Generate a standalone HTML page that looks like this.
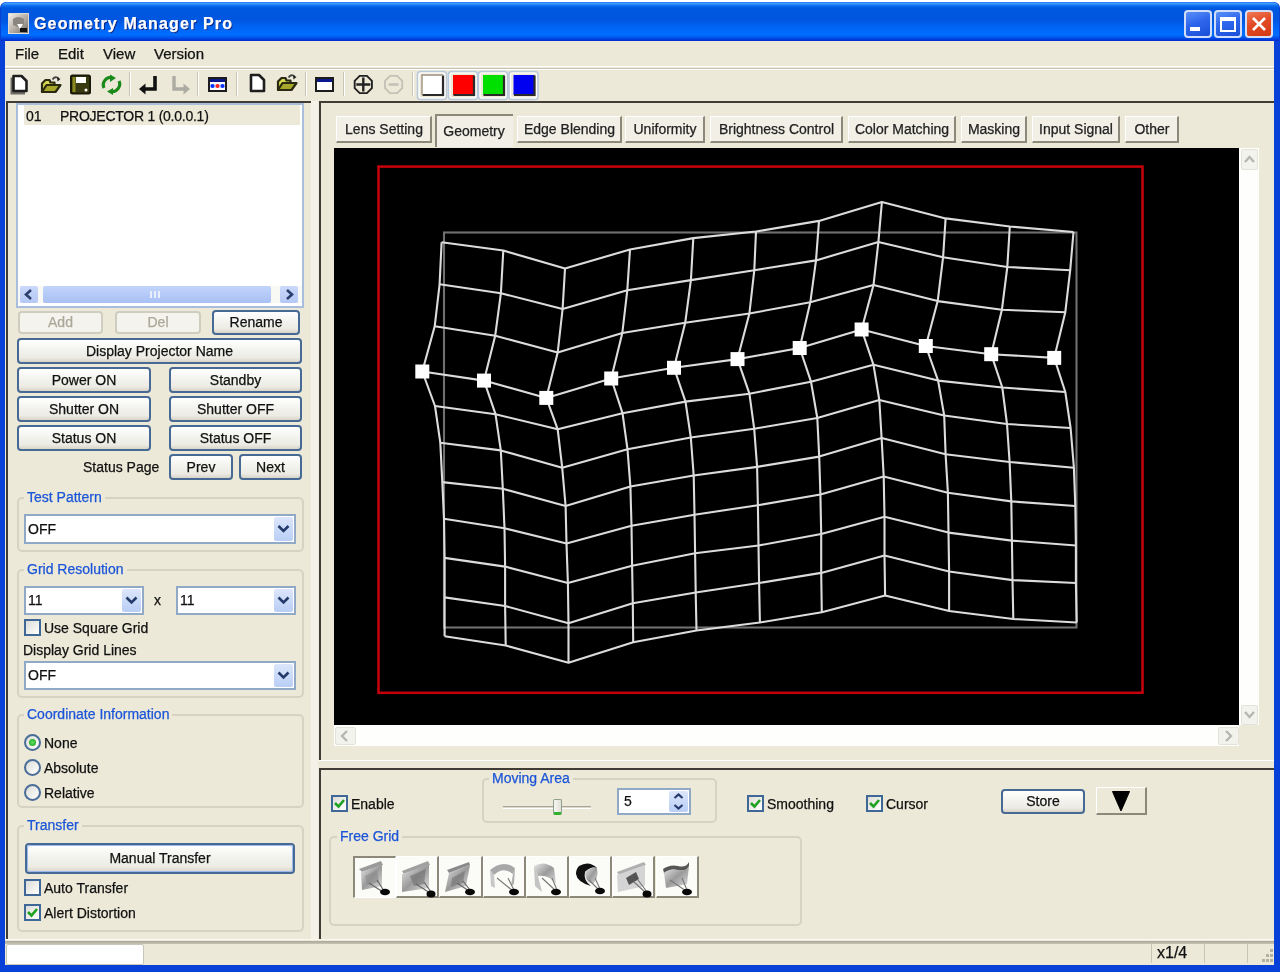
<!DOCTYPE html><html><head><meta charset="utf-8"><style>html,body{margin:0;padding:0;width:1280px;height:972px;overflow:hidden;background:#fff;}body{position:relative;font-family:"Liberation Sans", sans-serif;}div{box-sizing:border-box;-webkit-text-stroke:0.25px currentColor;}</style></head><body><div id="wrap" style="position:absolute;left:0;top:0;width:1280px;height:972px;filter:blur(0.35px);">
<div style="position:absolute;left:0px;top:2px;width:1280px;height:970px;background:#0841D8;border-radius:6px 6px 0 0;"></div>
<div style="position:absolute;left:1px;top:2px;width:1278px;height:39px;background:linear-gradient(#3070FF 0px,#3A9AF8 1.5px,#0A6AF0 4px,#0058E0 6px,#0056DE 18px,#0062F2 24px,#006EFF 33px,#0050E8 36px,#0030D0 38.5px);border-radius:6px 6px 0 0;"></div>
<div style="position:absolute;left:5px;top:41px;width:1269px;height:924px;background:#ECE9D8;"></div>
<div style="position:absolute;left:8px;top:13px;width:21px;height:21px;background:linear-gradient(135deg,#F2F0EA 0%,#B8B2A8 50%,#6E6A64 100%);border:1px solid #E0DCD4;"></div>
<svg style="position:absolute;left:8px;top:13px" width="21" height="21"><path d="M5 6 Q10 2 16 6 L16 12 L10 14 L5 12 Z" fill="#8A8680"/><path d="M9 11 L15 11 L12 16 Z" fill="#FFFFFF"/><rect x="12" y="15" width="7" height="4" fill="#111"/></svg>
<div style="position:absolute;left:34px;top:16px;font-size:16px;line-height:16px;color:#fff;white-space:nowrap;font-weight:bold;letter-spacing:1.15px;text-shadow:1px 1px 0 #0A1E78;">Geometry Manager Pro</div>
<div style="position:absolute;left:1183.5px;top:9.5px;width:28px;height:28.5px;background:linear-gradient(160deg,#5A90F8 0%,#2D66EC 45%,#1A4FD8 100%);border:2px solid #D2DEF8;border-radius:4px;"></div>
<div style="position:absolute;left:1214px;top:9.5px;width:28px;height:28.5px;background:linear-gradient(160deg,#5A90F8 0%,#2D66EC 45%,#1A4FD8 100%);border:2px solid #D2DEF8;border-radius:4px;"></div>
<div style="position:absolute;left:1244.5px;top:9.5px;width:28px;height:28.5px;background:linear-gradient(160deg,#F07A58 0%,#E24B25 45%,#D33A12 100%);border:2px solid #D2DEF8;border-radius:4px;"></div>
<div style="position:absolute;left:1190px;top:27px;width:10px;height:4px;background:#fff;"></div>
<div style="position:absolute;left:1220px;top:16.5px;width:16px;height:15.5px;border:2px solid #fff;border-top-width:4px;"></div>
<svg style="position:absolute;left:1244.5px;top:9.5px" width="28" height="28"><path d="M8 8 L20 20 M20 8 L8 20" stroke="#fff" stroke-width="2.6"/></svg>
<div style="position:absolute;left:15px;top:46px;font-size:15px;line-height:15px;color:#111;white-space:nowrap;">File</div>
<div style="position:absolute;left:58px;top:46px;font-size:15px;line-height:15px;color:#111;white-space:nowrap;">Edit</div>
<div style="position:absolute;left:103px;top:46px;font-size:15px;line-height:15px;color:#111;white-space:nowrap;">View</div>
<div style="position:absolute;left:154px;top:46px;font-size:15px;line-height:15px;color:#111;white-space:nowrap;">Version</div>
<div style="position:absolute;left:5px;top:66px;width:1269px;height:1px;background:#FFFFFF;"></div>
<div style="position:absolute;left:5px;top:68px;width:1269px;height:1px;background:#C9C5B6;"></div>
<div style="position:absolute;left:5px;top:69px;width:1269px;height:1px;background:#FFFFFF;"></div>
<div style="position:absolute;left:129px;top:72px;width:1px;height:24px;background:#CAC6B6;"></div>
<div style="position:absolute;left:130px;top:72px;width:1px;height:24px;background:#FFFFFF;"></div>
<div style="position:absolute;left:197px;top:72px;width:1px;height:24px;background:#CAC6B6;"></div>
<div style="position:absolute;left:198px;top:72px;width:1px;height:24px;background:#FFFFFF;"></div>
<div style="position:absolute;left:236px;top:72px;width:1px;height:24px;background:#CAC6B6;"></div>
<div style="position:absolute;left:237px;top:72px;width:1px;height:24px;background:#FFFFFF;"></div>
<div style="position:absolute;left:305px;top:72px;width:1px;height:24px;background:#CAC6B6;"></div>
<div style="position:absolute;left:306px;top:72px;width:1px;height:24px;background:#FFFFFF;"></div>
<div style="position:absolute;left:343px;top:72px;width:1px;height:24px;background:#CAC6B6;"></div>
<div style="position:absolute;left:344px;top:72px;width:1px;height:24px;background:#FFFFFF;"></div>
<div style="position:absolute;left:412px;top:72px;width:1px;height:24px;background:#CAC6B6;"></div>
<div style="position:absolute;left:413px;top:72px;width:1px;height:24px;background:#FFFFFF;"></div>
<svg style="position:absolute;left:0;top:0" width="1280" height="110"><path d="M12.0 77.5 L12.0 93.0 L25.0 93.0" fill="none" stroke="#6E6C66" stroke-width="3"/><path d="M13.5 76.0 L21.5 76.0 L26.5 81.0 L26.5 91.0 L13.5 91.0 Z" fill="#FFFFFF" stroke="#1E1E1E" stroke-width="2.6" stroke-linejoin="round"/><path d="M251 75.0 L259.0 75.0 L264.0 80.0 L264.0 91.0 L251 91.0 Z" fill="#FFFFFF" stroke="#1E1E1E" stroke-width="2.6" stroke-linejoin="round"/><path d="M42.0 83.5 L45.5 80.0 L49.5 80.0 L50.5 82.5 L54.5 82.5 L54.5 92.0 L42.0 92.0 Z" fill="#D8D850" stroke="#2A2A10" stroke-width="2.2" stroke-linejoin="round"/><path d="M42.0 92.0 L46.5 85.0 L60.5 85.0 L55.5 92.0 Z" fill="#A6A62A" stroke="#2A2A10" stroke-width="2.2" stroke-linejoin="round"/><path d="M52.5 79.5 Q55.5 75.5 58.5 78.5" fill="none" stroke="#444" stroke-width="1.8"/><path d="M57.0 77.0 L60.5 79.0 L57.5 81.5 Z" fill="#222"/><path d="M278.0 81.5 L281.5 78.0 L285.5 78.0 L286.5 80.5 L290.5 80.5 L290.5 90.0 L278.0 90.0 Z" fill="#D8D850" stroke="#2A2A10" stroke-width="2.2" stroke-linejoin="round"/><path d="M278.0 90.0 L282.5 83.0 L296.5 83.0 L291.5 90.0 Z" fill="#A6A62A" stroke="#2A2A10" stroke-width="2.2" stroke-linejoin="round"/><path d="M288.5 77.5 Q291.5 73.5 294.5 76.5" fill="none" stroke="#444" stroke-width="1.8"/><path d="M293.0 75.0 L296.5 77.0 L293.5 79.5 Z" fill="#222"/><rect x="71" y="75.5" width="19" height="18" rx="1.5" fill="#3A3A10" stroke="#1A1A08" stroke-width="2"/><rect x="72.5" y="77" width="3" height="15" fill="#8A8A20"/><rect x="76" y="77" width="10" height="6" fill="#FFFFFF"/><circle cx="86" cy="90" r="1.5" fill="#fff"/><path d="M104 88 A7.5 7.5 0 0 1 112 77.5" fill="none" stroke="#1A8A1A" stroke-width="3.2"/><path d="M110 74.5 L116 78 L110 82 Z" fill="#1A8A1A"/><path d="M119 81 A7.5 7.5 0 0 1 111 91.5" fill="none" stroke="#1A8A1A" stroke-width="3.2"/><path d="M113 88 L107 91.5 L113 95 Z" fill="#1A8A1A"/><path d="M155 76 L155 89 L144 89" fill="none" stroke="#111" stroke-width="3.6" stroke-linejoin="miter"/><path d="M145.5 83.5 L139 89 L145.5 94.5 Z" fill="#111"/><path d="M174 76 L174 89 L185 89" fill="none" stroke="#ADACA2" stroke-width="3.4"/><path d="M183.5 83.5 L190 89 L183.5 94.5 Z" fill="#ADACA2"/><rect x="209" y="78" width="17" height="13" fill="#FFFFFF" stroke="#1C1C1C" stroke-width="2"/><rect x="210" y="79" width="15" height="3" fill="#0A1890"/><rect x="210" y="84" width="15" height="4" fill="#D8E0FF"/><circle cx="212.5" cy="86" r="2" fill="#0030FF"/><circle cx="217.5" cy="86" r="2" fill="#FF2020"/><circle cx="222.5" cy="86" r="2" fill="#0030FF"/><rect x="316" y="78" width="17" height="13" fill="#FFFFFF" stroke="#1C1C1C" stroke-width="2"/><rect x="317" y="79" width="15" height="3" fill="#0A1890"/><polygon points="371.9,88.1 366.9,93.1 359.7,93.1 354.7,88.1 354.7,80.9 359.7,75.9 366.9,75.9 371.9,80.9" fill="none" stroke="#222" stroke-width="1.9"/><path d="M356.3 84.5 L370.3 84.5 M363.3 77.5 L363.3 91.5" stroke="#222" stroke-width="2.4"/><polygon points="402.2,88.1 397.2,93.1 390.0,93.1 385.0,88.1 385.0,80.9 390.0,75.9 397.2,75.9 402.2,80.9" fill="none" stroke="#C4C2B6" stroke-width="1.9"/><path d="M388.6 84.5 L398.6 84.5" stroke="#C4C2B6" stroke-width="2.6"/><rect x="417.5" y="71.5" width="29" height="28" rx="3" fill="none" stroke="#B9C9DD" stroke-width="1.6"/><rect x="419" y="73" width="26" height="25" rx="2" fill="none" stroke="#FFFFFF" stroke-width="1.2"/><rect x="422" y="75" width="21" height="20" fill="#FFFFFF"/><path d="M443 75.5 L443 95 L422.5 95" fill="none" stroke="#2A2A2A" stroke-width="2.2"/><path d="M422 95 L422 75 L443 75" fill="none" stroke="#9A9080" stroke-width="1.4"/><rect x="448.5" y="71.5" width="29" height="28" rx="3" fill="none" stroke="#B9C9DD" stroke-width="1.6"/><rect x="450" y="73" width="26" height="25" rx="2" fill="none" stroke="#FFFFFF" stroke-width="1.2"/><rect x="453" y="75" width="21" height="20" fill="#FF0000"/><path d="M474 75.5 L474 95 L453.5 95" fill="none" stroke="#2A2A2A" stroke-width="2.2"/><rect x="478.5" y="71.5" width="29" height="28" rx="3" fill="none" stroke="#B9C9DD" stroke-width="1.6"/><rect x="480" y="73" width="26" height="25" rx="2" fill="none" stroke="#FFFFFF" stroke-width="1.2"/><rect x="483" y="75" width="21" height="20" fill="#00E000"/><path d="M504 75.5 L504 95 L483.5 95" fill="none" stroke="#2A2A2A" stroke-width="2.2"/><rect x="509.0" y="71.5" width="29" height="28" rx="3" fill="none" stroke="#B9C9DD" stroke-width="1.6"/><rect x="510.5" y="73" width="26" height="25" rx="2" fill="none" stroke="#FFFFFF" stroke-width="1.2"/><rect x="513.5" y="75" width="21" height="20" fill="#0000F0"/><path d="M534.5 75.5 L534.5 95 L514.0 95" fill="none" stroke="#2A2A2A" stroke-width="2.2"/></svg>
<div style="position:absolute;left:6px;top:101px;width:306px;height:839px;border-top:2px solid #3F3D36;border-left:2px solid #3F3D36;"></div>
<div style="position:absolute;left:16px;top:103px;width:288px;height:205px;background:#fff;border:2px solid #A9BEDC;"></div>
<div style="position:absolute;left:24px;top:105px;width:276px;height:20px;background:#ECE9D8;"></div>
<div style="position:absolute;left:26px;top:109px;font-size:14px;line-height:14px;color:#111;white-space:nowrap;">01</div>
<div style="position:absolute;left:60px;top:109px;font-size:14px;line-height:14px;color:#111;white-space:nowrap;letter-spacing:-0.25px;">PROJECTOR 1 (0.0.0.1)</div>
<div style="position:absolute;left:18px;top:286px;width:284px;height:17px;background:#F8F8F4;"></div>
<div style="position:absolute;left:20px;top:286px;width:18px;height:17px;background:linear-gradient(#C9D8FA,#B5C8F5);border-radius:2px;"></div>
<div style="position:absolute;left:43px;top:286px;width:228px;height:17px;background:linear-gradient(#C2D4FB,#A8C0F4);border-radius:2px;"></div>
<div style="position:absolute;left:280px;top:286px;width:18px;height:17px;background:linear-gradient(#C9D8FA,#B5C8F5);border-radius:2px;"></div>
<svg style="position:absolute;left:20px;top:286px" width="18" height="17"><path d="M11 4 L6 8.5 L11 13" stroke="#2A3F6E" stroke-width="2.6" fill="none"/></svg>
<svg style="position:absolute;left:280px;top:286px" width="18" height="17"><path d="M7 4 L12 8.5 L7 13" stroke="#2A3F6E" stroke-width="2.6" fill="none"/></svg>
<div style="position:absolute;left:150px;top:291px;width:2px;height:7px;background:#E8EEFC;"></div>
<div style="position:absolute;left:154px;top:291px;width:2px;height:7px;background:#E8EEFC;"></div>
<div style="position:absolute;left:158px;top:291px;width:2px;height:7px;background:#E8EEFC;"></div>
<div style="position:absolute;left:18px;top:311px;width:85px;height:23px;border:2px solid #CFCDC0;border-radius:4px;background:#F4F3EE;box-sizing:border-box;"></div>
<div style="position:absolute;left:18px;top:311px;width:85px;height:23px;font-size:14px;line-height:23px;color:#ACA899;text-align:center;white-space:nowrap;">Add</div>
<div style="position:absolute;left:115px;top:311px;width:86px;height:23px;border:2px solid #CFCDC0;border-radius:4px;background:#F4F3EE;box-sizing:border-box;"></div>
<div style="position:absolute;left:115px;top:311px;width:86px;height:23px;font-size:14px;line-height:23px;color:#ACA899;text-align:center;white-space:nowrap;">Del</div>
<div style="position:absolute;left:212px;top:310px;width:88px;height:25px;border:2px solid #466A93;border-radius:4px;background:linear-gradient(#FFFFFF 0%,#F4F4F0 40%,#ECEBE4 80%,#D8D4C8 100%);box-sizing:border-box;"></div>
<div style="position:absolute;left:212px;top:310px;width:88px;height:25px;font-size:14px;line-height:25px;color:#111;text-align:center;white-space:nowrap;">Rename</div>
<div style="position:absolute;left:17px;top:338px;width:285px;height:26px;border:2px solid #466A93;border-radius:4px;background:linear-gradient(#FFFFFF 0%,#F4F4F0 40%,#ECEBE4 80%,#D8D4C8 100%);box-sizing:border-box;"></div>
<div style="position:absolute;left:17px;top:338px;width:285px;height:26px;font-size:14px;line-height:26px;color:#111;text-align:center;white-space:nowrap;">Display Projector Name</div>
<div style="position:absolute;left:17px;top:367px;width:134px;height:26px;border:2px solid #466A93;border-radius:4px;background:linear-gradient(#FFFFFF 0%,#F4F4F0 40%,#ECEBE4 80%,#D8D4C8 100%);box-sizing:border-box;"></div>
<div style="position:absolute;left:17px;top:367px;width:134px;height:26px;font-size:14px;line-height:26px;color:#111;text-align:center;white-space:nowrap;">Power ON</div>
<div style="position:absolute;left:169px;top:367px;width:133px;height:26px;border:2px solid #466A93;border-radius:4px;background:linear-gradient(#FFFFFF 0%,#F4F4F0 40%,#ECEBE4 80%,#D8D4C8 100%);box-sizing:border-box;"></div>
<div style="position:absolute;left:169px;top:367px;width:133px;height:26px;font-size:14px;line-height:26px;color:#111;text-align:center;white-space:nowrap;">Standby</div>
<div style="position:absolute;left:17px;top:396px;width:134px;height:26px;border:2px solid #466A93;border-radius:4px;background:linear-gradient(#FFFFFF 0%,#F4F4F0 40%,#ECEBE4 80%,#D8D4C8 100%);box-sizing:border-box;"></div>
<div style="position:absolute;left:17px;top:396px;width:134px;height:26px;font-size:14px;line-height:26px;color:#111;text-align:center;white-space:nowrap;">Shutter ON</div>
<div style="position:absolute;left:169px;top:396px;width:133px;height:26px;border:2px solid #466A93;border-radius:4px;background:linear-gradient(#FFFFFF 0%,#F4F4F0 40%,#ECEBE4 80%,#D8D4C8 100%);box-sizing:border-box;"></div>
<div style="position:absolute;left:169px;top:396px;width:133px;height:26px;font-size:14px;line-height:26px;color:#111;text-align:center;white-space:nowrap;">Shutter OFF</div>
<div style="position:absolute;left:17px;top:425px;width:134px;height:26px;border:2px solid #466A93;border-radius:4px;background:linear-gradient(#FFFFFF 0%,#F4F4F0 40%,#ECEBE4 80%,#D8D4C8 100%);box-sizing:border-box;"></div>
<div style="position:absolute;left:17px;top:425px;width:134px;height:26px;font-size:14px;line-height:26px;color:#111;text-align:center;white-space:nowrap;">Status ON</div>
<div style="position:absolute;left:169px;top:425px;width:133px;height:26px;border:2px solid #466A93;border-radius:4px;background:linear-gradient(#FFFFFF 0%,#F4F4F0 40%,#ECEBE4 80%,#D8D4C8 100%);box-sizing:border-box;"></div>
<div style="position:absolute;left:169px;top:425px;width:133px;height:26px;font-size:14px;line-height:26px;color:#111;text-align:center;white-space:nowrap;">Status OFF</div>
<div style="position:absolute;left:83px;top:460px;font-size:14px;line-height:14px;color:#111;white-space:nowrap;">Status Page</div>
<div style="position:absolute;left:169px;top:454px;width:64px;height:26px;border:2px solid #466A93;border-radius:4px;background:linear-gradient(#FFFFFF 0%,#F4F4F0 40%,#ECEBE4 80%,#D8D4C8 100%);box-sizing:border-box;"></div>
<div style="position:absolute;left:169px;top:454px;width:64px;height:26px;font-size:14px;line-height:26px;color:#111;text-align:center;white-space:nowrap;">Prev</div>
<div style="position:absolute;left:239px;top:454px;width:63px;height:26px;border:2px solid #466A93;border-radius:4px;background:linear-gradient(#FFFFFF 0%,#F4F4F0 40%,#ECEBE4 80%,#D8D4C8 100%);box-sizing:border-box;"></div>
<div style="position:absolute;left:239px;top:454px;width:63px;height:26px;font-size:14px;line-height:26px;color:#111;text-align:center;white-space:nowrap;">Next</div>
<div style="position:absolute;left:17px;top:497px;width:287px;height:55px;border:2px solid #D6D3C2;border-radius:5px;box-sizing:border-box;"></div>
<div style="position:absolute;left:24px;top:489px;padding:0 3px;background:#ECE9D8;font-size:14px;line-height:16px;color:#1B55D8;white-space:nowrap;">Test Pattern</div>
<div style="position:absolute;left:24px;top:514px;width:272px;height:30px;border:2px solid #8FA9C6;background:#fff;box-sizing:border-box;"></div>
<div style="position:absolute;left:28px;top:521.5px;font-size:14px;line-height:14px;color:#111;white-space:nowrap;">OFF</div>
<div style="position:absolute;left:274px;top:517px;width:19px;height:24px;background:linear-gradient(#DCE6FB,#B9CEF6);border-radius:2px;"><svg width="19" height="24" style="position:absolute;left:0;top:0"><path d="M4.5 9.0 L9.5 14.0 L14.5 9.0" stroke="#243A6A" stroke-width="2.6" fill="none"/></svg></div>
<div style="position:absolute;left:17px;top:569px;width:287px;height:129px;border:2px solid #D6D3C2;border-radius:5px;box-sizing:border-box;"></div>
<div style="position:absolute;left:24px;top:561px;padding:0 3px;background:#ECE9D8;font-size:14px;line-height:16px;color:#1B55D8;white-space:nowrap;">Grid Resolution</div>
<div style="position:absolute;left:24px;top:586px;width:120px;height:29px;border:2px solid #8FA9C6;background:#fff;box-sizing:border-box;"></div>
<div style="position:absolute;left:28px;top:593.0px;font-size:14px;line-height:14px;color:#111;white-space:nowrap;">11</div>
<div style="position:absolute;left:122px;top:589px;width:19px;height:23px;background:linear-gradient(#DCE6FB,#B9CEF6);border-radius:2px;"><svg width="19" height="23" style="position:absolute;left:0;top:0"><path d="M4.5 8.5 L9.5 13.5 L14.5 8.5" stroke="#243A6A" stroke-width="2.6" fill="none"/></svg></div>
<div style="position:absolute;left:154px;top:593px;font-size:14px;line-height:14px;color:#111;white-space:nowrap;">x</div>
<div style="position:absolute;left:176px;top:586px;width:120px;height:29px;border:2px solid #8FA9C6;background:#fff;box-sizing:border-box;"></div>
<div style="position:absolute;left:180px;top:593.0px;font-size:14px;line-height:14px;color:#111;white-space:nowrap;">11</div>
<div style="position:absolute;left:274px;top:589px;width:19px;height:23px;background:linear-gradient(#DCE6FB,#B9CEF6);border-radius:2px;"><svg width="19" height="23" style="position:absolute;left:0;top:0"><path d="M4.5 8.5 L9.5 13.5 L14.5 8.5" stroke="#243A6A" stroke-width="2.6" fill="none"/></svg></div>
<div style="position:absolute;left:24px;top:619px;width:17px;height:17px;border:2px solid #3F6896;background:linear-gradient(135deg,#DCDCD7,#FFFFFF);box-sizing:border-box;"></div>
<div style="position:absolute;left:44px;top:621px;font-size:14px;line-height:14px;color:#111;white-space:nowrap;">Use Square Grid</div>
<div style="position:absolute;left:23px;top:643px;font-size:14px;line-height:14px;color:#111;white-space:nowrap;">Display Grid Lines</div>
<div style="position:absolute;left:24px;top:661px;width:272px;height:29px;border:2px solid #8FA9C6;background:#fff;box-sizing:border-box;"></div>
<div style="position:absolute;left:28px;top:668.0px;font-size:14px;line-height:14px;color:#111;white-space:nowrap;">OFF</div>
<div style="position:absolute;left:274px;top:664px;width:19px;height:23px;background:linear-gradient(#DCE6FB,#B9CEF6);border-radius:2px;"><svg width="19" height="23" style="position:absolute;left:0;top:0"><path d="M4.5 8.5 L9.5 13.5 L14.5 8.5" stroke="#243A6A" stroke-width="2.6" fill="none"/></svg></div>
<div style="position:absolute;left:17px;top:714px;width:287px;height:94px;border:2px solid #D6D3C2;border-radius:5px;box-sizing:border-box;"></div>
<div style="position:absolute;left:24px;top:706px;padding:0 3px;background:#ECE9D8;font-size:14px;line-height:16px;color:#1B55D8;white-space:nowrap;">Coordinate Information</div>
<div style="position:absolute;left:24px;top:734px;width:17px;height:17px;border:2px solid #4A6E98;border-radius:50%;background:linear-gradient(135deg,#DCDCD7,#FFFFFF);box-sizing:border-box;"></div>
<div style="position:absolute;left:29px;top:739px;width:7px;height:7px;border-radius:50%;background:radial-gradient(#5FE05F,#1A9A1A);"></div>
<div style="position:absolute;left:44px;top:736px;font-size:14px;line-height:14px;color:#111;white-space:nowrap;">None</div>
<div style="position:absolute;left:24px;top:759px;width:17px;height:17px;border:2px solid #4A6E98;border-radius:50%;background:linear-gradient(135deg,#DCDCD7,#FFFFFF);box-sizing:border-box;"></div>
<div style="position:absolute;left:44px;top:761px;font-size:14px;line-height:14px;color:#111;white-space:nowrap;">Absolute</div>
<div style="position:absolute;left:24px;top:784px;width:17px;height:17px;border:2px solid #4A6E98;border-radius:50%;background:linear-gradient(135deg,#DCDCD7,#FFFFFF);box-sizing:border-box;"></div>
<div style="position:absolute;left:44px;top:786px;font-size:14px;line-height:14px;color:#111;white-space:nowrap;">Relative</div>
<div style="position:absolute;left:17px;top:825px;width:287px;height:107px;border:2px solid #D6D3C2;border-radius:5px;box-sizing:border-box;"></div>
<div style="position:absolute;left:24px;top:817px;padding:0 3px;background:#ECE9D8;font-size:14px;line-height:16px;color:#1B55D8;white-space:nowrap;">Transfer</div>
<div style="position:absolute;left:25px;top:843px;width:270px;height:31px;border:2px solid #466A93;border-radius:4px;background:linear-gradient(#FFFFFF 0%,#F4F4F0 40%,#ECEBE4 80%,#D8D4C8 100%);box-sizing:border-box;"></div>
<div style="position:absolute;left:25px;top:843px;width:270px;height:31px;font-size:14px;line-height:31px;color:#111;text-align:center;white-space:nowrap;">Manual Transfer</div>
<div style="position:absolute;left:27px;top:845px;width:266px;height:27px;border:1px solid #98B8EE;border-radius:3px;"></div>
<div style="position:absolute;left:24px;top:879px;width:17px;height:17px;border:2px solid #3F6896;background:linear-gradient(135deg,#DCDCD7,#FFFFFF);box-sizing:border-box;"></div>
<div style="position:absolute;left:44px;top:881px;font-size:14px;line-height:14px;color:#111;white-space:nowrap;">Auto Transfer</div>
<div style="position:absolute;left:24px;top:904px;width:17px;height:17px;border:2px solid #3F6896;background:linear-gradient(135deg,#DCDCD7,#FFFFFF);box-sizing:border-box;"></div>
<svg style="position:absolute;left:24px;top:904px" width="17" height="17"><path d="M4 8 L7.5 11.5 L13 5" stroke="#21A121" stroke-width="2.6" fill="none"/></svg>
<div style="position:absolute;left:44px;top:906px;font-size:14px;line-height:14px;color:#111;white-space:nowrap;">Alert Distortion</div>
<div style="position:absolute;left:311px;top:101px;width:7px;height:839px;background:#F3F1E8;"></div>
<div style="position:absolute;left:319px;top:101px;width:955px;height:660px;border-top:2px solid #3F3D36;border-left:2px solid #3F3D36;"></div>
<div style="position:absolute;left:319px;top:760px;width:955px;height:1px;background:#FFFFFF;"></div>
<div style="position:absolute;left:336px;top:116px;width:96px;height:27px;border-right:2px solid #8C897A;border-bottom:2px solid #8C897A;border-top:1px solid #fff;border-left:1px solid #fff;background:#F1EFE6;"></div>
<div style="position:absolute;left:336px;top:117px;width:96px;height:25px;font-size:14px;line-height:25px;color:#222;text-align:center;white-space:nowrap;">Lens Setting</div>
<div style="position:absolute;left:435px;top:114px;width:78px;height:33px;border-top:2px solid #8C897A;border-left:2px solid #8C897A;background:#F2F0E6;"></div>
<div style="position:absolute;left:435px;top:117px;width:78px;height:28px;font-size:14px;line-height:28px;color:#222;text-align:center;white-space:nowrap;">Geometry</div>
<div style="position:absolute;left:517px;top:116px;width:105px;height:27px;border-right:2px solid #8C897A;border-bottom:2px solid #8C897A;border-top:1px solid #fff;border-left:1px solid #fff;background:#F1EFE6;"></div>
<div style="position:absolute;left:517px;top:117px;width:105px;height:25px;font-size:14px;line-height:25px;color:#222;text-align:center;white-space:nowrap;">Edge Blending</div>
<div style="position:absolute;left:625px;top:116px;width:80px;height:27px;border-right:2px solid #8C897A;border-bottom:2px solid #8C897A;border-top:1px solid #fff;border-left:1px solid #fff;background:#F1EFE6;"></div>
<div style="position:absolute;left:625px;top:117px;width:80px;height:25px;font-size:14px;line-height:25px;color:#222;text-align:center;white-space:nowrap;">Uniformity</div>
<div style="position:absolute;left:710px;top:116px;width:133px;height:27px;border-right:2px solid #8C897A;border-bottom:2px solid #8C897A;border-top:1px solid #fff;border-left:1px solid #fff;background:#F1EFE6;"></div>
<div style="position:absolute;left:710px;top:117px;width:133px;height:25px;font-size:14px;line-height:25px;color:#222;text-align:center;white-space:nowrap;">Brightness Control</div>
<div style="position:absolute;left:848px;top:116px;width:108px;height:27px;border-right:2px solid #8C897A;border-bottom:2px solid #8C897A;border-top:1px solid #fff;border-left:1px solid #fff;background:#F1EFE6;"></div>
<div style="position:absolute;left:848px;top:117px;width:108px;height:25px;font-size:14px;line-height:25px;color:#222;text-align:center;white-space:nowrap;">Color Matching</div>
<div style="position:absolute;left:961px;top:116px;width:66px;height:27px;border-right:2px solid #8C897A;border-bottom:2px solid #8C897A;border-top:1px solid #fff;border-left:1px solid #fff;background:#F1EFE6;"></div>
<div style="position:absolute;left:961px;top:117px;width:66px;height:25px;font-size:14px;line-height:25px;color:#222;text-align:center;white-space:nowrap;">Masking</div>
<div style="position:absolute;left:1032px;top:116px;width:88px;height:27px;border-right:2px solid #8C897A;border-bottom:2px solid #8C897A;border-top:1px solid #fff;border-left:1px solid #fff;background:#F1EFE6;"></div>
<div style="position:absolute;left:1032px;top:117px;width:88px;height:25px;font-size:14px;line-height:25px;color:#222;text-align:center;white-space:nowrap;">Input Signal</div>
<div style="position:absolute;left:1125px;top:116px;width:54px;height:27px;border-right:2px solid #8C897A;border-bottom:2px solid #8C897A;border-top:1px solid #fff;border-left:1px solid #fff;background:#F1EFE6;"></div>
<div style="position:absolute;left:1125px;top:117px;width:54px;height:25px;font-size:14px;line-height:25px;color:#222;text-align:center;white-space:nowrap;">Other</div>
<div style="position:absolute;left:334px;top:148px;width:905px;height:577px;background:#000;"></div>
<div style="position:absolute;left:1239px;top:148px;width:20px;height:577px;background:#FEFEFC;"></div>
<div style="position:absolute;left:1241px;top:149px;width:17px;height:21px;background:#F3F3EE;border:1px solid #E4E3DA;border-radius:2px;"></div>
<div style="position:absolute;left:1241px;top:705px;width:17px;height:20px;background:#F3F3EE;border:1px solid #E4E3DA;border-radius:2px;"></div>
<div style="position:absolute;left:334px;top:725px;width:905px;height:21px;background:#FEFEFC;"></div>
<div style="position:absolute;left:335px;top:727px;width:21px;height:18px;background:#F3F3EE;border:1px solid #E4E3DA;border-radius:2px;"></div>
<div style="position:absolute;left:1218px;top:727px;width:21px;height:18px;background:#F3F3EE;border:1px solid #E4E3DA;border-radius:2px;"></div>
<svg style="position:absolute;left:1241px;top:149px" width="17" height="21"><path d="M4 13 L8.5 8 L13 13" stroke="#B8B7AE" stroke-width="2.4" fill="none"/></svg>
<svg style="position:absolute;left:1241px;top:705px" width="17" height="20"><path d="M4 7 L8.5 12 L13 7" stroke="#B8B7AE" stroke-width="2.4" fill="none"/></svg>
<svg style="position:absolute;left:335px;top:727px" width="21" height="18"><path d="M12 4 L7 9 L12 14" stroke="#B8B7AE" stroke-width="2.4" fill="none"/></svg>
<svg style="position:absolute;left:1218px;top:727px" width="21" height="18"><path d="M8 4 L13 9 L8 14" stroke="#B8B7AE" stroke-width="2.4" fill="none"/></svg>
<svg style="position:absolute;left:0;top:0" width="1280" height="972"><rect x="378.5" y="166.6" width="764" height="526.2" fill="none" stroke="#C8000C" stroke-width="2.5"/><rect x="444" y="232.5" width="632.5" height="395" fill="none" stroke="#707070" stroke-width="2.1"/><polyline fill="none" stroke="#DCDCDC" stroke-width="2.1" stroke-linejoin="round" points="441.6,242.3 503.3,250.5 565,268.5 630,249.5 693.3,238.1 756,231.5 819,220.9 881.9,201.9 945.6,218.4 1009.8,226.5 1073.5,232"/><polyline fill="none" stroke="#DCDCDC" stroke-width="2.1" stroke-linejoin="round" points="439.6,284.3 500.9,293.2 562.6,309 627.3,290.3 690.9,280.1 754.3,270.2 816,260.4 878.4,241.9 943.1,257.2 1007.3,267 1070.2,270.2"/><polyline fill="none" stroke="#DCDCDC" stroke-width="2.1" stroke-linejoin="round" points="434.7,326.3 495.2,335.7 557.7,352.5 622.3,333 685.2,322.8 749.4,313.5 810.3,302.3 873.5,285 937.7,301.1 1001.9,309.8 1065.3,312.2"/><polyline fill="none" stroke="#DCDCDC" stroke-width="2.1" stroke-linejoin="round" points="422.3,371.5 484,380.6 546.3,397.9 611.2,378.5 674,367.8 737.5,359.1 799.7,348 861.6,329.5 925.8,346 991.2,354.2 1054.2,357.9"/><polyline fill="none" stroke="#DCDCDC" stroke-width="2.1" stroke-linejoin="round" points="435,406 495.5,414.2 557.7,429.3 622.5,413.2 685.5,401.6 749.4,393.7 811,381.7 873.5,364.8 938.1,380.6 1002.3,387.5 1065.3,392"/><polyline fill="none" stroke="#DCDCDC" stroke-width="2.1" stroke-linejoin="round" points="440.3,442.7 500.8,450.4 562.2,467.7 627.5,449.3 690.8,437.5 754.2,428.8 817.3,418 879.3,400 944.2,415.5 1007,424 1070.6,428"/><polyline fill="none" stroke="#DCDCDC" stroke-width="2.1" stroke-linejoin="round" points="442.3,482.1 502.8,488.8 565.6,506 630.4,486.5 693.7,475.5 757.1,466.9 819.2,456.6 881.6,438 945.6,454.2 1009.6,462 1073.9,467.7"/><polyline fill="none" stroke="#DCDCDC" stroke-width="2.1" stroke-linejoin="round" points="444,518.7 504.5,528.2 566.5,543.5 631.5,525.8 694.5,514.7 757.9,505.2 820.4,494.5 883.7,476.4 947.9,492.8 1011.3,501.4 1075.3,506"/><polyline fill="none" stroke="#DCDCDC" stroke-width="2.1" stroke-linejoin="round" points="444.6,557.9 505.1,566.6 567.9,583 632.1,565.7 695.1,553.3 758.5,545.5 821.2,534 884.5,516.7 948.5,532.6 1011.9,540.6 1075.9,545.5"/><polyline fill="none" stroke="#DCDCDC" stroke-width="2.1" stroke-linejoin="round" points="444.6,597.4 505.1,606 568.5,623.3 632.8,603.2 695.7,592.5 759.1,583 821.2,572.9 884.5,555.6 949.1,571.5 1012.5,580.1 1075.9,583"/><polyline fill="none" stroke="#DCDCDC" stroke-width="2.1" stroke-linejoin="round" points="444.6,636.3 505.7,645.5 568.5,662.8 633.2,642.3 696.5,630.5 759.9,622.5 821.8,612.2 885.1,595.4 949.1,611 1013.3,619 1076.7,622.5"/><polyline fill="none" stroke="#DCDCDC" stroke-width="2.1" stroke-linejoin="round" points="441.6,242.3 439.6,284.3 434.7,326.3 422.3,371.5 435,406 440.3,442.7 442.3,482.1 444,518.7 444.6,557.9 444.6,597.4 444.6,636.3"/><polyline fill="none" stroke="#DCDCDC" stroke-width="2.1" stroke-linejoin="round" points="503.3,250.5 500.9,293.2 495.2,335.7 484,380.6 495.5,414.2 500.8,450.4 502.8,488.8 504.5,528.2 505.1,566.6 505.1,606 505.7,645.5"/><polyline fill="none" stroke="#DCDCDC" stroke-width="2.1" stroke-linejoin="round" points="565,268.5 562.6,309 557.7,352.5 546.3,397.9 557.7,429.3 562.2,467.7 565.6,506 566.5,543.5 567.9,583 568.5,623.3 568.5,662.8"/><polyline fill="none" stroke="#DCDCDC" stroke-width="2.1" stroke-linejoin="round" points="630,249.5 627.3,290.3 622.3,333 611.2,378.5 622.5,413.2 627.5,449.3 630.4,486.5 631.5,525.8 632.1,565.7 632.8,603.2 633.2,642.3"/><polyline fill="none" stroke="#DCDCDC" stroke-width="2.1" stroke-linejoin="round" points="693.3,238.1 690.9,280.1 685.2,322.8 674,367.8 685.5,401.6 690.8,437.5 693.7,475.5 694.5,514.7 695.1,553.3 695.7,592.5 696.5,630.5"/><polyline fill="none" stroke="#DCDCDC" stroke-width="2.1" stroke-linejoin="round" points="756,231.5 754.3,270.2 749.4,313.5 737.5,359.1 749.4,393.7 754.2,428.8 757.1,466.9 757.9,505.2 758.5,545.5 759.1,583 759.9,622.5"/><polyline fill="none" stroke="#DCDCDC" stroke-width="2.1" stroke-linejoin="round" points="819,220.9 816,260.4 810.3,302.3 799.7,348 811,381.7 817.3,418 819.2,456.6 820.4,494.5 821.2,534 821.2,572.9 821.8,612.2"/><polyline fill="none" stroke="#DCDCDC" stroke-width="2.1" stroke-linejoin="round" points="881.9,201.9 878.4,241.9 873.5,285 861.6,329.5 873.5,364.8 879.3,400 881.6,438 883.7,476.4 884.5,516.7 884.5,555.6 885.1,595.4"/><polyline fill="none" stroke="#DCDCDC" stroke-width="2.1" stroke-linejoin="round" points="945.6,218.4 943.1,257.2 937.7,301.1 925.8,346 938.1,380.6 944.2,415.5 945.6,454.2 947.9,492.8 948.5,532.6 949.1,571.5 949.1,611"/><polyline fill="none" stroke="#DCDCDC" stroke-width="2.1" stroke-linejoin="round" points="1009.8,226.5 1007.3,267 1001.9,309.8 991.2,354.2 1002.3,387.5 1007,424 1009.6,462 1011.3,501.4 1011.9,540.6 1012.5,580.1 1013.3,619"/><polyline fill="none" stroke="#DCDCDC" stroke-width="2.1" stroke-linejoin="round" points="1073.5,232 1070.2,270.2 1065.3,312.2 1054.2,357.9 1065.3,392 1070.6,428 1073.9,467.7 1075.3,506 1075.9,545.5 1075.9,583 1076.7,622.5"/><rect x="415.3" y="364.5" width="14" height="14" fill="#FFFFFF"/><rect x="477" y="373.6" width="14" height="14" fill="#FFFFFF"/><rect x="539.3" y="390.9" width="14" height="14" fill="#FFFFFF"/><rect x="604.2" y="371.5" width="14" height="14" fill="#FFFFFF"/><rect x="667" y="360.8" width="14" height="14" fill="#FFFFFF"/><rect x="730.5" y="352.1" width="14" height="14" fill="#FFFFFF"/><rect x="792.7" y="341" width="14" height="14" fill="#FFFFFF"/><rect x="854.6" y="322.5" width="14" height="14" fill="#FFFFFF"/><rect x="918.8" y="339" width="14" height="14" fill="#FFFFFF"/><rect x="984.2" y="347.2" width="14" height="14" fill="#FFFFFF"/><rect x="1047.2" y="350.9" width="14" height="14" fill="#FFFFFF"/></svg>
<div style="position:absolute;left:319px;top:768px;width:955px;height:171px;border-top:2px solid #3F3D36;border-left:2px solid #3F3D36;"></div>
<div style="position:absolute;left:331px;top:795px;width:17px;height:17px;border:2px solid #3F6896;background:linear-gradient(135deg,#DCDCD7,#FFFFFF);box-sizing:border-box;"></div>
<svg style="position:absolute;left:331px;top:795px" width="17" height="17"><path d="M4 8 L7.5 11.5 L13 5" stroke="#21A121" stroke-width="2.6" fill="none"/></svg>
<div style="position:absolute;left:351px;top:797px;font-size:14px;line-height:14px;color:#111;white-space:nowrap;">Enable</div>
<div style="position:absolute;left:482px;top:778px;width:235px;height:45px;border:2px solid #D6D3C2;border-radius:5px;box-sizing:border-box;"></div>
<div style="position:absolute;left:489px;top:770px;padding:0 3px;background:#ECE9D8;font-size:14px;line-height:16px;color:#1B55D8;white-space:nowrap;">Moving Area</div>
<div style="position:absolute;left:503px;top:806px;width:88px;height:3px;border-top:1px solid #A8A69A;border-bottom:1px solid #fff;background:#DCD9CC;"></div>
<div style="position:absolute;left:553px;top:799px;width:9px;height:16px;background:linear-gradient(90deg,#F6F6F2,#E2E0D6);border:1px solid #8EA08E;border-bottom:3px solid #2FB12F;border-radius:2px;"></div>
<div style="position:absolute;left:617px;top:788px;width:74px;height:27px;border:2px solid #8FA9C6;background:#fff;"></div>
<div style="position:absolute;left:624px;top:794px;font-size:14px;line-height:14px;color:#111;white-space:nowrap;">5</div>
<div style="position:absolute;left:669px;top:791px;width:19px;height:21px;background:linear-gradient(#DCE6FB,#B9CEF6);border-radius:2px;"></div>
<svg style="position:absolute;left:669px;top:791px" width="19" height="21"><path d="M5.5 7 L9.5 3.5 L13.5 7 M5.5 14 L9.5 17.5 L13.5 14" stroke="#243A6A" stroke-width="2.2" fill="none"/></svg>
<div style="position:absolute;left:747px;top:795px;width:17px;height:17px;border:2px solid #3F6896;background:linear-gradient(135deg,#DCDCD7,#FFFFFF);box-sizing:border-box;"></div>
<svg style="position:absolute;left:747px;top:795px" width="17" height="17"><path d="M4 8 L7.5 11.5 L13 5" stroke="#21A121" stroke-width="2.6" fill="none"/></svg>
<div style="position:absolute;left:767px;top:797px;font-size:14px;line-height:14px;color:#111;white-space:nowrap;">Smoothing</div>
<div style="position:absolute;left:866px;top:795px;width:17px;height:17px;border:2px solid #3F6896;background:linear-gradient(135deg,#DCDCD7,#FFFFFF);box-sizing:border-box;"></div>
<svg style="position:absolute;left:866px;top:795px" width="17" height="17"><path d="M4 8 L7.5 11.5 L13 5" stroke="#21A121" stroke-width="2.6" fill="none"/></svg>
<div style="position:absolute;left:886px;top:797px;font-size:14px;line-height:14px;color:#111;white-space:nowrap;">Cursor</div>
<div style="position:absolute;left:1001px;top:789px;width:84px;height:25px;border:2px solid #466A93;border-radius:4px;background:linear-gradient(#FFFFFF 0%,#F4F4F0 40%,#ECEBE4 80%,#D8D4C8 100%);box-sizing:border-box;"></div>
<div style="position:absolute;left:1001px;top:789px;width:84px;height:25px;font-size:14px;line-height:25px;color:#111;text-align:center;white-space:nowrap;">Store</div>
<div style="position:absolute;left:1096px;top:787px;width:51px;height:28px;border-right:2px solid #8C897A;border-bottom:2px solid #8C897A;border-top:1px solid #fff;border-left:1px solid #fff;"></div>
<svg style="position:absolute;left:1096px;top:787px" width="51" height="28"><path d="M16.5 4.5 L33.5 4.5 L29 15 L25 24 L21 15 Z" fill="#000" stroke="#000" stroke-width="1" stroke-linejoin="round"/></svg>
<div style="position:absolute;left:329px;top:836px;width:473px;height:90px;border:2px solid #D6D3C2;border-radius:5px;box-sizing:border-box;"></div>
<div style="position:absolute;left:337px;top:828px;padding:0 3px;background:#ECE9D8;font-size:14px;line-height:16px;color:#1B55D8;white-space:nowrap;">Free Grid</div>
<svg width="0" height="0" style="position:absolute"><defs><linearGradient id="g1" x1="0" y1="0" x2="1" y2="1"><stop offset="0" stop-color="#E8E8E8"/><stop offset="0.5" stop-color="#9A9A9A"/><stop offset="1" stop-color="#E0E0E0"/></linearGradient></defs></svg>
<div style="position:absolute;left:352.8px;top:855.5px;width:43.3px;height:42.5px;border-left:2px solid #8C897A;border-top:2px solid #8C897A;border-right:1px solid #fff;border-bottom:1px solid #fff;background:#FBFBF8;"></div>
<svg style="position:absolute;left:352.8px;top:855.5px" width="43" height="42"><path d="M6 13 L28 5 L30 9 L9 16 Z" fill="#9A9A9A"/><path d="M8 16 L29 9 L29 30 L9 34 Z" fill="url(#g1)"/><path d="M12 20 L24 14 L26 26 L14 29 Z" fill="#8A8A8A" opacity="0.6"/><path d="M16 27 L30 36 M24 24 L31 35" stroke="#666" stroke-width="1.2"/><ellipse cx="32" cy="36" rx="5" ry="3.2" fill="#080808"/></svg>
<div style="position:absolute;left:396.0px;top:855.5px;width:43.3px;height:42.5px;border-right:2px solid #8C897A;border-bottom:2px solid #8C897A;border-top:1px solid #fff;border-left:1px solid #fff;background:#FBFBF8;"></div>
<svg style="position:absolute;left:396.0px;top:855.5px" width="43" height="42"><path d="M6 15 L32 5 L34 9 L8 18 Z" fill="#A0A0A0"/><path d="M6 18 L33 9 L33 32 L6 36 Z" fill="url(#g1)"/><path d="M14 20 L30 13 L28 28 L18 30 Z" fill="#6A6A6A" opacity="0.55"/><path d="M20 28 L34 37 M28 26 L35 36" stroke="#666" stroke-width="1.2"/><ellipse cx="35" cy="38" rx="4.5" ry="3.6" fill="#080808"/></svg>
<div style="position:absolute;left:439.3px;top:855.5px;width:43.3px;height:42.5px;border-right:2px solid #8C897A;border-bottom:2px solid #8C897A;border-top:1px solid #fff;border-left:1px solid #fff;background:#FBFBF8;"></div>
<svg style="position:absolute;left:439.3px;top:855.5px" width="43" height="42"><path d="M8 14 L30 6 L31 9 L10 17 Z" fill="#8A8A8A"/><path d="M10 17 L31 9 L27 30 L6 36 Z" fill="url(#g1)"/><path d="M13 22 L26 15 L24 27 L12 31 Z" fill="#6A6A6A" opacity="0.5"/><path d="M18 27 L30 35 M24 25 L31 34" stroke="#666" stroke-width="1.2"/><ellipse cx="31" cy="36" rx="5" ry="3.2" fill="#080808"/></svg>
<div style="position:absolute;left:482.5px;top:855.5px;width:43.3px;height:42.5px;border-right:2px solid #8C897A;border-bottom:2px solid #8C897A;border-top:1px solid #fff;border-left:1px solid #fff;background:#FBFBF8;"></div>
<svg style="position:absolute;left:482.5px;top:855.5px" width="43" height="42"><path d="M7 14 Q20 3 32 12 L30 18 Q20 10 11 19 Z" fill="#A8A8A8"/><path d="M7 14 L11 19 L12 32 L8 30 Z" fill="#C8C8C8"/><path d="M30 18 L32 12 L31 28 L28 30 Z" fill="#B0B0B0"/><path d="M14 22 L30 35 M25 22 L31 34" stroke="#777" stroke-width="1.1"/><ellipse cx="31" cy="36" rx="5" ry="3.2" fill="#080808"/></svg>
<div style="position:absolute;left:525.8px;top:855.5px;width:43.3px;height:42.5px;border-right:2px solid #8C897A;border-bottom:2px solid #8C897A;border-top:1px solid #fff;border-left:1px solid #fff;background:#FBFBF8;"></div>
<svg style="position:absolute;left:525.8px;top:855.5px" width="43" height="42"><path d="M8 10 Q18 4 28 12 L30 28 Q22 18 12 20 Z" fill="url(#g1)"/><path d="M8 10 L12 20 L16 36 L9 30 Z" fill="#C4C4C4"/><path d="M16 22 L30 35 M26 22 L31 34" stroke="#777" stroke-width="1.1"/><ellipse cx="30" cy="36" rx="5" ry="3.2" fill="#080808"/></svg>
<div style="position:absolute;left:569.0px;top:855.5px;width:43.3px;height:42.5px;border-right:2px solid #8C897A;border-bottom:2px solid #8C897A;border-top:1px solid #fff;border-left:1px solid #fff;background:#FBFBF8;"></div>
<svg style="position:absolute;left:569.0px;top:855.5px" width="43" height="42"><path d="M10 10 Q20 4 28 12 Q22 10 16 16 Q14 24 22 30 Q8 26 7 18 Q7 13 10 10 Z" fill="#111"/><path d="M16 16 Q22 10 28 12 Q30 22 24 28 Q16 26 16 16 Z" fill="url(#g1)"/><path d="M20 24 L30 34 M26 22 L31 33" stroke="#777" stroke-width="1.1"/><ellipse cx="31" cy="35" rx="5" ry="3.2" fill="#080808"/></svg>
<div style="position:absolute;left:612.2px;top:855.5px;width:43.3px;height:42.5px;border-right:2px solid #8C897A;border-bottom:2px solid #8C897A;border-top:1px solid #fff;border-left:1px solid #fff;background:#FBFBF8;"></div>
<svg style="position:absolute;left:612.2px;top:855.5px" width="43" height="42"><path d="M5 16 L32 6 L34 9 L7 19 Z" fill="#B0B0B0"/><path d="M5 19 L33 9 L33 30 L6 36 Z" fill="#D4D4D4"/><path d="M14 22 L24 16 L27 23 L17 29 Z" fill="#555"/><path d="M22 26 L34 37 M26 24 L35 36" stroke="#777" stroke-width="1.2"/><ellipse cx="35" cy="38" rx="4.5" ry="3.6" fill="#080808"/></svg>
<div style="position:absolute;left:655.5px;top:855.5px;width:43.3px;height:42.5px;border-right:2px solid #8C897A;border-bottom:2px solid #8C897A;border-top:1px solid #fff;border-left:1px solid #fff;background:#FBFBF8;"></div>
<svg style="position:absolute;left:655.5px;top:855.5px" width="43" height="42"><path d="M7 13 Q14 8 22 10 Q30 12 33 6 L33 10 Q30 16 22 14 Q14 12 8 17 Z" fill="#555"/><path d="M8 17 Q14 12 22 14 Q30 16 33 10 L31 28 Q22 30 10 32 Z" fill="url(#g1)"/><path d="M14 24 L30 35 M26 22 L31 34" stroke="#777" stroke-width="1.1"/><ellipse cx="31" cy="36" rx="5" ry="3.2" fill="#080808"/></svg>
<div style="position:absolute;left:5px;top:938.5px;width:1269px;height:1.5px;background:#FAF8F0;"></div>
<div style="position:absolute;left:5px;top:940.5px;width:1269px;height:3.5px;background:linear-gradient(#A9A597,#C8C4B5);"></div>
<div style="position:absolute;left:6px;top:944px;width:138px;height:21px;background:#fff;border:1px solid #CBC7B8;border-radius:2px;"></div>
<div style="position:absolute;left:1151px;top:943px;width:1px;height:20px;background:#C9C5B6;"></div>
<div style="position:absolute;left:1204px;top:943px;width:1px;height:20px;background:#C9C5B6;"></div>
<div style="position:absolute;left:1247px;top:943px;width:1px;height:20px;background:#C9C5B6;"></div>
<div style="position:absolute;left:1157px;top:945px;font-size:16px;line-height:16px;color:#111;white-space:nowrap;">x1/4</div>
<div style="position:absolute;left:1270px;top:949px;width:2.5px;height:2.5px;background:#B5B1A0;"></div>
<div style="position:absolute;left:1266px;top:954px;width:2.5px;height:2.5px;background:#B5B1A0;"></div>
<div style="position:absolute;left:1270px;top:954px;width:2.5px;height:2.5px;background:#B5B1A0;"></div>
<div style="position:absolute;left:1262px;top:959px;width:2.5px;height:2.5px;background:#B5B1A0;"></div>
<div style="position:absolute;left:1266px;top:959px;width:2.5px;height:2.5px;background:#B5B1A0;"></div>
<div style="position:absolute;left:1270px;top:959px;width:2.5px;height:2.5px;background:#B5B1A0;"></div>
</div></body></html>
